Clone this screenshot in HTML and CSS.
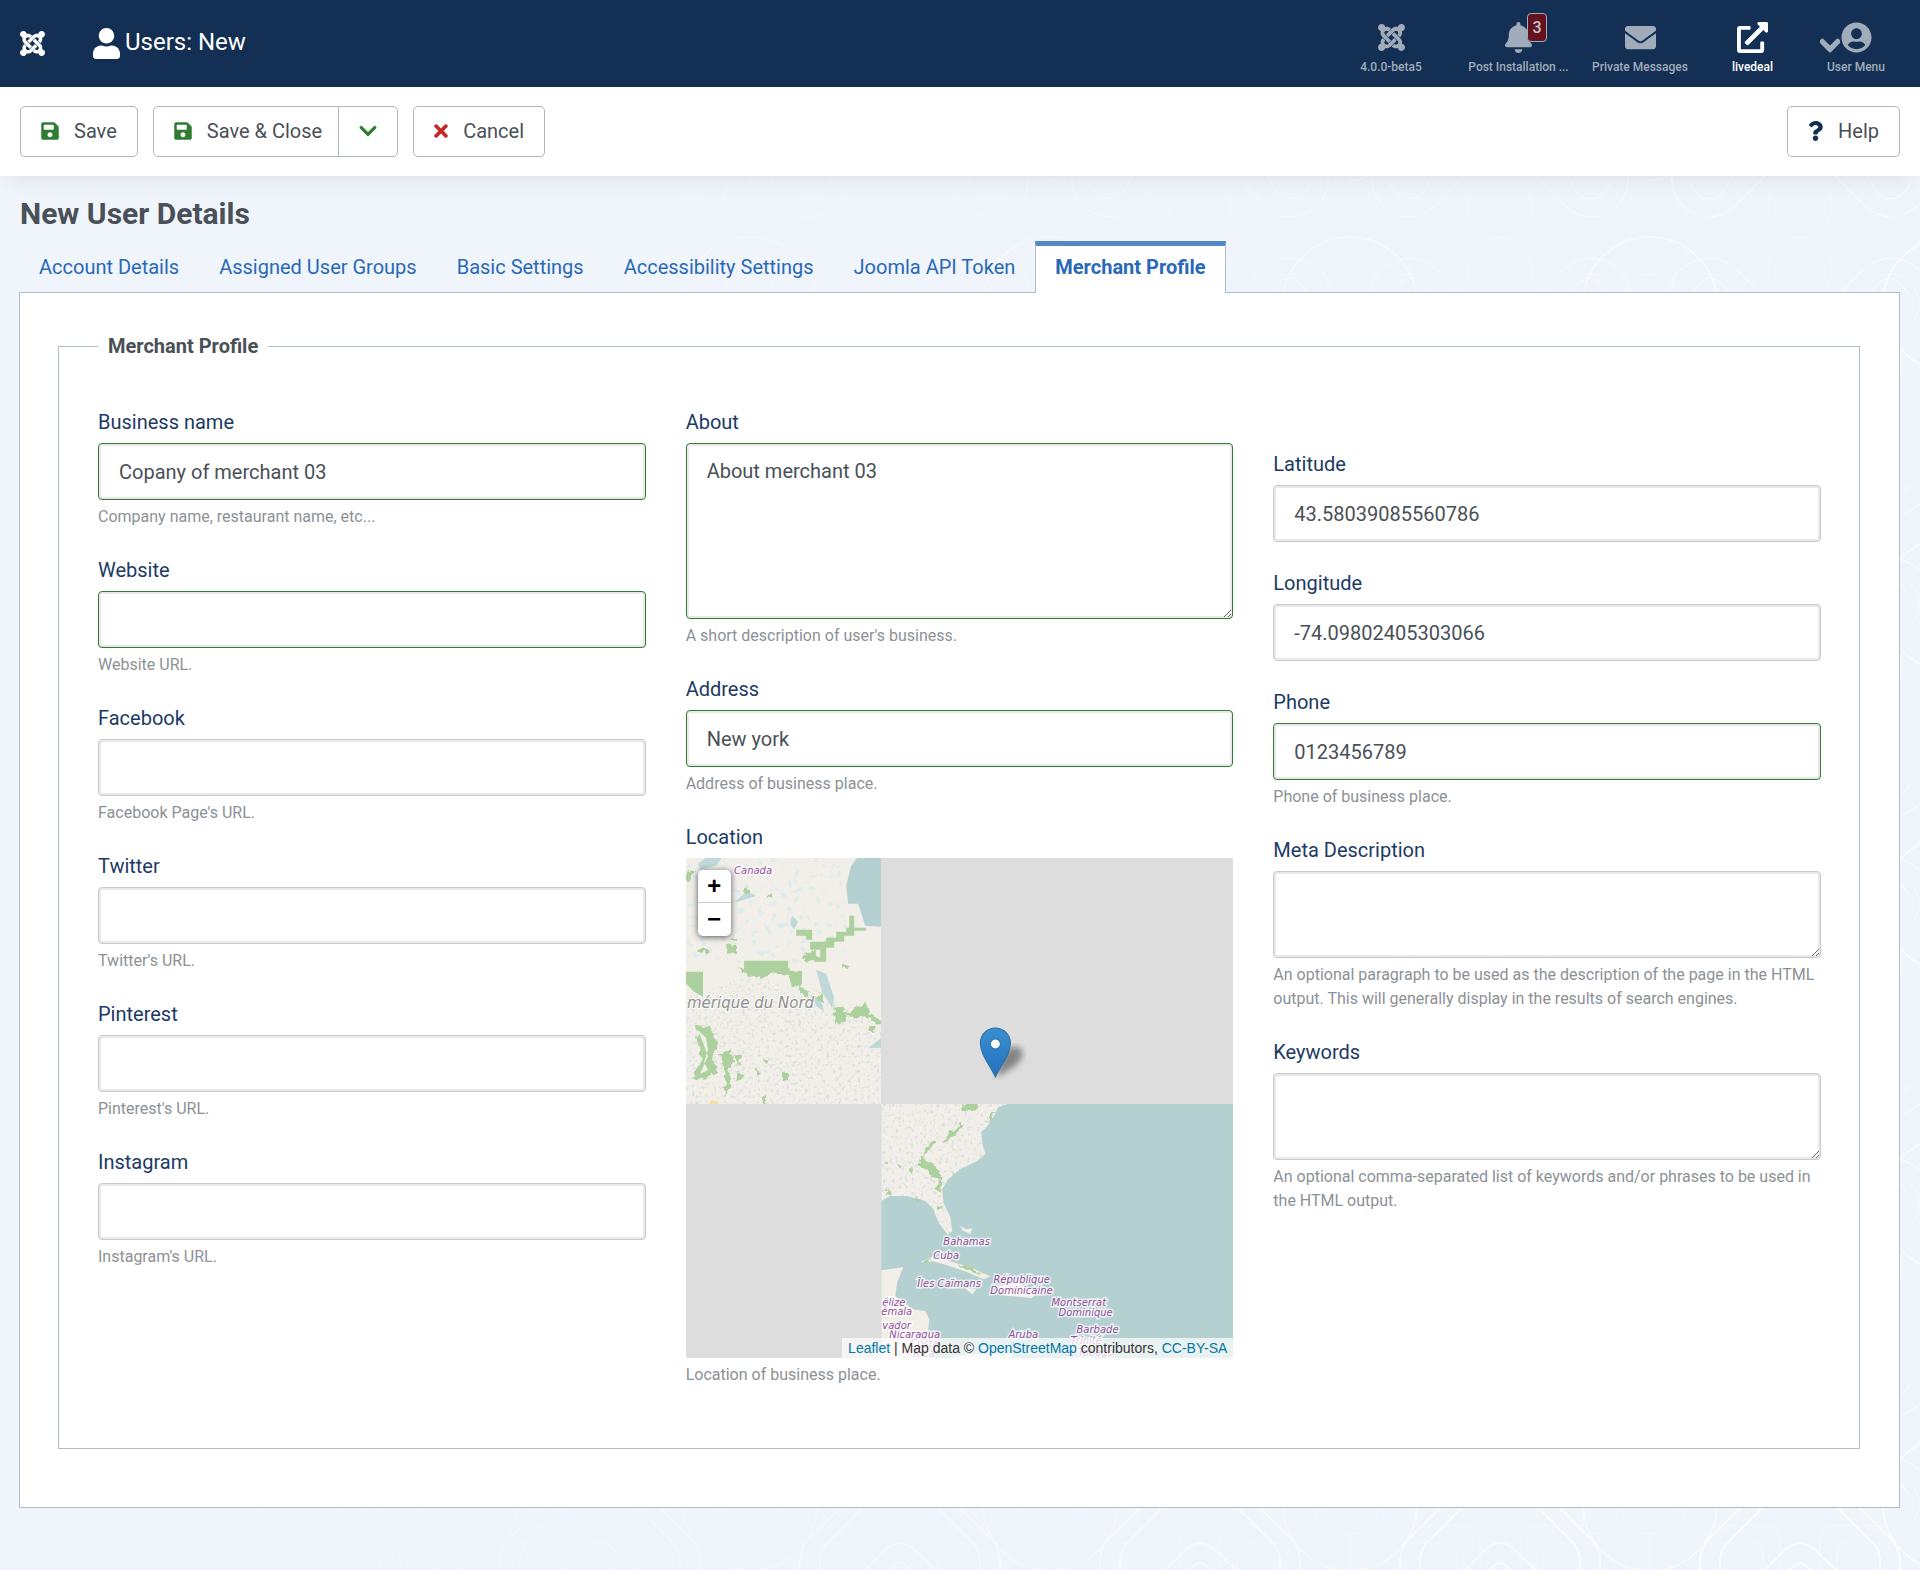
FILE: index.html
```html
<!DOCTYPE html>
<html lang="en">
<head>
<meta charset="utf-8">
<meta name="viewport" content="width=device-width, initial-scale=1">
<title>Users: New</title>
<link rel="stylesheet" href="styles.css">
</head>
<body>
<svg class="sprite" aria-hidden="true">
  <symbol id="i-joomla" viewBox="0 32 448 448"><path d="M.6 92.1C.6 58.8 27.4 32 60.4 32c30 0 54.5 21.9 59.2 50.2 32.6-7.6 67.1.6 96.5 30l-44.3 44.3c-20.5-20.5-42.6-16.3-55.4-3.5-14.3 14.3-14.3 37.9 0 52.2l99.5 99.5-44 44.3c-87.7-87.2-49.7-49.7-99.8-99.7-26.8-26.5-35-64.8-24.8-98.9C20.4 144.6.6 120.7.6 92.1zm129.5 116.4l44.3 44.3c10-10 89.7-89.7 99.7-99.8 14.3-14.3 37.6-14.3 51.9 0 12.8 12.8 17 35-3.5 55.4l44 44.3c31.2-31.2 38.5-67.6 28.9-101.2 29.2-4.1 51.9-29.2 51.9-59.5 0-33.2-26.8-60.1-59.8-60.1-30.3 0-55.4 22.5-59.5 51.6-33.8-9.9-71.7-1.5-98.3 25.1-18.3 19.1-71.1 71.5-99.6 99.9zm266.3 152.2c8.2-32.7-.9-68.5-26.3-93.9-11.8-12.2 5 4.7-99.5-99.7l-44.3 44.3 99.7 99.7c14.3 14.3 14.3 37.6 0 51.9-12.8 12.8-35 17-55.4-3.5l-44 44.3c27.6 30.2 68 38.8 102.7 28 5.5 27.4 29.7 48.1 58.9 48.1 33 0 59.8-26.8 59.8-60.1 0-30.2-22.5-55-51.6-59.1zm-84.3-53.1l-44-44.3c-87 86.4-50.4 50.4-99.7 99.8-14.3 14.3-37.6 14.3-51.9 0-13.1-13.4-16.9-35.3 3.2-55.4l-44-44.3c-30.2 30.2-38 65.2-29.5 98.3-26.7 6-46.2 29.9-46.2 58.2C0 453.2 26.8 480 59.8 480c28.6 0 52.5-19.8 58.6-46.7 32.7 8.2 68.5-.6 94.2-26 32.1-32 12.2-12.4 99.5-99.7z"/></symbol>
  <symbol id="i-user" viewBox="0 0 448 512"><path d="M224 256c70.7 0 128-57.3 128-128S294.7 0 224 0 96 57.3 96 128s57.3 128 128 128zm89.6 32h-16.7c-22.2 10.2-46.9 16-72.9 16s-50.6-5.8-72.9-16h-16.7C60.2 288 0 348.2 0 422.4V464c0 26.5 21.5 48 48 48h352c26.5 0 48-21.5 48-48v-41.6c0-74.2-60.2-134.4-134.4-134.4z"/></symbol>
  <symbol id="i-bell" viewBox="0 0 448 512"><path d="M224 512c35.32 0 63.97-28.65 63.97-64H160.03c0 35.35 28.65 64 63.97 64zm215.39-149.71c-19.32-20.76-55.47-51.99-55.47-154.29 0-77.7-54.48-139.9-127.94-155.16V32c0-17.67-14.32-32-31.98-32s-31.98 14.33-31.98 32v20.84C118.56 68.1 64.08 130.3 64.08 208c0 102.3-36.15 133.53-55.47 154.29-6 6.45-8.66 14.16-8.61 21.71.11 16.4 12.98 32 32.1 32h383.8c19.12 0 32-15.6 32.1-32 .05-7.55-2.61-15.27-8.61-21.71z"/></symbol>
  <symbol id="i-envelope" viewBox="0 0 512 512"><path d="M502.3 190.8c3.9-3.1 9.7-.2 9.7 4.7V400c0 26.5-21.5 48-48 48H48c-26.5 0-48-21.5-48-48V195.6c0-5 5.7-7.8 9.7-4.7 22.4 17.4 52.1 39.5 154.1 113.6 21.1 15.4 56.7 47.8 92.2 47.6 35.7.3 72-32.8 92.3-47.6 102-74.1 131.6-96.3 154-113.7zM256 320c23.2.4 56.6-29.2 73.4-41.4 132.7-96.3 142.8-104.7 173.4-128.7 5.8-4.5 9.2-11.5 9.2-18.9v-19c0-26.5-21.5-48-48-48H48c-26.5 0-48 21.5-48 48v19c0 7.4 3.4 14.3 9.2 18.9 30.6 23.9 40.7 32.4 173.4 128.7 16.8 12.2 50.2 41.8 73.4 41.4z"/></symbol>
  <symbol id="i-external" viewBox="0 0 512 512"><path d="M432,320H400a16,16,0,0,0-16,16V448H64V128H208a16,16,0,0,0,16-16V80a16,16,0,0,0-16-16H48A48,48,0,0,0,0,112V464a48,48,0,0,0,48,48H400a48,48,0,0,0,48-48V336A16,16,0,0,0,432,320ZM488,0h-128c-21.37,0-32.05,25.91-17,41l35.73,35.73L135,320.37a24,24,0,0,0,0,34L157.67,377a24,24,0,0,0,34,0L435.28,133.32,471,169c15,15,41,4.5,41-17V24A24,24,0,0,0,488,0Z"/></symbol>
  <symbol id="i-account" viewBox="0 0 496 512"><path d="M248 8C111 8 0 119 0 256s111 248 248 248 248-111 248-248S385 8 248 8zm0 96c48.6 0 88 39.4 88 88s-39.4 88-88 88-88-39.4-88-88 39.4-88 88-88zm0 344c-58.7 0-111.3-26.6-146.5-68.2 18.8-35.4 55.6-59.8 98.5-59.8 2.4 0 4.8.4 7.1 1.1 13 4.2 26.6 6.9 40.9 6.9 14.3 0 28-2.7 40.9-6.9 2.3-.7 4.7-1.1 7.1-1.1 42.9 0 79.7 24.4 98.5 59.8C359.3 421.4 306.7 448 248 448z"/></symbol>
  <symbol id="i-chevron" viewBox="0 0 448 512"><path d="M207.029 381.476L12.686 187.132c-9.373-9.373-9.373-24.569 0-33.941l22.667-22.667c9.357-9.357 24.522-9.375 33.901-.04L224 284.505l154.745-154.021c9.379-9.335 24.544-9.317 33.901.04l22.667 22.667c9.373 9.373 9.373 24.569 0 33.941L240.971 381.476c-9.373 9.372-24.569 9.372-33.942 0z"/></symbol>
  <symbol id="i-save" viewBox="0 0 448 512"><path d="M433.941 129.941l-83.882-83.882A48 48 0 0 0 316.118 32H48C21.49 32 0 53.49 0 80v352c0 26.51 21.49 48 48 48h352c26.51 0 48-21.49 48-48V163.882a48 48 0 0 0-14.059-33.941zM224 416c-35.346 0-64-28.654-64-64 0-35.346 28.654-64 64-64s64 28.654 64 64c0 35.346-28.654 64-64 64zm96-304.52V212c0 6.627-5.373 12-12 12H76c-6.627 0-12-5.373-12-12V108c0-6.627 5.373-12 12-12h228.52c3.183 0 6.235 1.264 8.485 3.515l3.48 3.48A11.996 11.996 0 0 1 320 111.48z"/></symbol>
  <symbol id="i-times" viewBox="0 0 352 512"><path d="M242.72 256l100.07-100.07c12.28-12.28 12.28-32.19 0-44.48l-22.24-22.24c-12.28-12.28-32.19-12.28-44.48 0L176 189.28 75.93 89.21c-12.28-12.28-32.19-12.28-44.48 0L9.21 111.45c-12.28 12.28-12.28 32.19 0 44.48L109.28 256 9.21 356.07c-12.28 12.28-12.28 32.19 0 44.48l22.24 22.24c12.28 12.28 32.2 12.28 44.48 0L176 322.72l100.07 100.07c12.28 12.28 32.2 12.28 44.48 0l22.24-22.24c12.28-12.28 12.28-32.19 0-44.48L242.72 256z"/></symbol>
  <symbol id="i-question" viewBox="0 0 384 512"><path d="M202.021 0C122.202 0 70.503 32.703 29.914 91.026c-7.363 10.58-5.093 25.086 5.178 32.874l43.138 32.709c10.373 7.865 25.132 6.026 33.253-4.148 25.049-31.381 43.63-49.449 82.757-49.449 30.764 0 68.816 19.799 68.816 49.631 0 22.552-18.617 34.134-48.993 51.164-35.423 19.86-82.299 44.576-82.299 106.405V320c0 13.255 10.745 24 24 24h72.471c13.255 0 24-10.745 24-24v-5.773c0-42.86 125.268-44.645 125.268-160.627C377.504 66.256 286.902 0 202.021 0zM192 373.459c-38.196 0-69.271 31.075-69.271 69.271 0 38.195 31.075 69.27 69.271 69.27s69.271-31.075 69.271-69.271-31.075-69.27-69.271-69.27z"/></symbol>
</svg>

<header class="topbar">
  <a class="brand" href="#" aria-label="Home"><svg class="ico-25"><use href="#i-joomla"/></svg></a>
  <h1 class="page-title"><svg class="ico-user"><use href="#i-user"/></svg>Users: New</h1>
  <nav class="status">
    <a class="status-item" href="#"><span class="status-icon"><svg class="ico-27"><use href="#i-joomla"/></svg></span>4.0.0-beta5</a>
    <a class="status-item" href="#"><span class="status-icon"><svg class="ico-31"><use href="#i-bell"/></svg><span class="badge">3</span></span>Post Installation ...</a>
    <a class="status-item" href="#"><span class="status-icon"><svg class="ico-31"><use href="#i-envelope"/></svg></span>Private Messages</a>
    <a class="status-item is-site" href="#"><span class="status-icon"><svg class="ico-31"><use href="#i-external"/></svg></span>livedeal</a>
    <a class="status-item" href="#"><span class="status-icon"><svg class="caret"><use href="#i-chevron"/></svg><svg class="ico-31"><use href="#i-account"/></svg></span>User Menu</a>
  </nav>
</header>

<div class="toolbar">
  <button class="btn" type="button"><svg class="save"><use href="#i-save"/></svg>Save</button>
  <div class="btn-group">
    <button class="btn" type="button"><svg class="save"><use href="#i-save"/></svg>Save &amp; Close</button>
    <button class="btn btn-caret" type="button" aria-label="More save options"><svg class="save"><use href="#i-chevron"/></svg></button>
  </div>
  <button class="btn" type="button"><svg class="cancel"><use href="#i-times"/></svg>Cancel</button>
  <button class="btn btn-help" type="button"><svg class="help-icon"><use href="#i-question"/></svg>Help</button>
</div>

<main class="main">
  <svg class="backdrop" aria-hidden="true">
    <defs>
      <linearGradient id="fade"><stop offset="0" stop-color="#000"/><stop offset="1" stop-color="#fff"/></linearGradient>
      <mask id="fade-mask"><rect width="100%" height="100%" fill="url(#fade)"/></mask>
      <pattern id="lines" width="300" height="300" x="150" patternUnits="userSpaceOnUse">
        <g fill="none" stroke="#fff" stroke-width="1">
          <path d="M30 -10Q5 12 -5 0M120 -5L85 30Q60 52 33 30Q20 18 22 -5M180 -5L215 30Q240 52 267 30Q280 18 278 -5"/>
          <path d="M83 -5Q75 23 60 23Q48 23 40 8M217 -5Q225 23 240 23Q252 23 260 8"/>
          <path d="M22 120Q20 98 33 92Q60 72 85 92L115 122M278 120Q280 98 267 92Q240 72 215 92L185 122M42 118Q60 86 80 118M258 118Q240 86 220 118"/>
          <g opacity=".5"><circle cx="150" cy="94" r="32"/><circle cx="150" cy="30" r="32"/><path d="M0 0v14M300 0v14M0 105v12M300 105v12"/></g>
          <circle cx="0" cy="128" r="67" stroke-width="2" opacity=".8"/><circle cx="300" cy="128" r="67" stroke-width="2" opacity=".8"/>
          <g opacity=".6"><circle cx="0" cy="128" r="30"/><circle cx="300" cy="128" r="30"/><path d="M0 158v50M300 158v50"/><circle cx="61" cy="128" r="30"/><circle cx="239" cy="128" r="30"/>
          <path d="M62 150H115Q130 150 130 168V220M238 150H185Q170 150 170 168V220M57 167H105Q113 170 113 182V220M243 167H195Q187 170 187 182V220"/></g>
          <path stroke-width="2" d="M90 132L56 166Q46 180 52 210M112 132L76 168Q66 180 72 204M210 132L244 166Q254 180 248 210M188 132L224 168Q234 180 228 204M115 194L136 173Q150 161 164 173L190 198M140 194Q150 180 160 194"/>
        </g>
      </pattern>
    </defs>
    <rect width="100%" height="100%" fill="url(#lines)" mask="url(#fade-mask)"/>
  </svg>

  <h2 class="form-title">New User Details</h2>
  <nav class="tabs">
    <a class="tab" href="#">Account Details</a>
    <a class="tab" href="#">Assigned User Groups</a>
    <a class="tab" href="#">Basic Settings</a>
    <a class="tab" href="#">Accessibility Settings</a>
    <a class="tab" href="#">Joomla API Token</a>
    <a class="tab is-active" href="#" aria-current="page">Merchant Profile</a>
  </nav>

  <form class="panel">
    <fieldset class="fieldset">
      <legend>Merchant Profile</legend>
      <div class="columns">
        <div class="column">
          <div class="field"><label for="business">Business name</label><input class="control is-valid" id="business" type="text" value="Copany of merchant 03"><small>Company name, restaurant name, etc...</small></div>
          <div class="field"><label for="website">Website</label><input class="control is-valid" id="website" type="text"><small>Website URL.</small></div>
          <div class="field"><label for="facebook">Facebook</label><input class="control" id="facebook" type="text"><small>Facebook Page's URL.</small></div>
          <div class="field"><label for="twitter">Twitter</label><input class="control" id="twitter" type="text"><small>Twitter's URL.</small></div>
          <div class="field"><label for="pinterest">Pinterest</label><input class="control" id="pinterest" type="text"><small>Pinterest's URL.</small></div>
          <div class="field"><label for="instagram">Instagram</label><input class="control" id="instagram" type="text"><small>Instagram's URL.</small></div>
        </div>

        <div class="column">
          <div class="field"><label for="about">About</label><textarea class="control is-valid is-tall" id="about">About merchant 03</textarea><small>A short description of user's business.</small></div>
          <div class="field"><label for="address">Address</label><input class="control is-valid" id="address" type="text" value="New york"><small>Address of business place.</small></div>
          <div class="field">
            <span class="label">Location</span>
            <div class="map">
              <svg class="map-canvas" viewBox="0 0 547 500" preserveAspectRatio="xMidYMid slice">
                <defs>
                  <filter id="speckle" x="0" y="0" width="100%" height="100%">
                    <feTurbulence type="fractalNoise" baseFrequency=".32" numOctaves="2" seed="4"/>
                    <feColorMatrix values="0 0 0 0 .68  0 0 0 0 .71  0 0 0 0 .71  3.5 0 0 0 -1.85"/>
                    <feComposite in2="SourceGraphic" operator="in"/>
                  </filter>
                  <filter id="lakes" x="0" y="0" width="100%" height="100%">
                    <feTurbulence type="fractalNoise" baseFrequency=".14" numOctaves="3" seed="9"/>
                    <feColorMatrix values="0 0 0 0 .7  0 0 0 0 .83  0 0 0 0 .84  6 0 0 0 -3.5"/>
                    <feComposite in2="SourceGraphic" operator="in"/>
                  </filter>
                  <filter id="ragged"><feTurbulence type="fractalNoise" baseFrequency=".18" numOctaves="2" seed="2"/><feDisplacementMap in="SourceGraphic" scale="7" xChannelSelector="R" yChannelSelector="G"/></filter>
                  <filter id="soft"><feGaussianBlur stdDeviation="3"/></filter>
                  <linearGradient id="pin" x2="0" y2="1"><stop offset="0" stop-color="#3b8fd0"/><stop offset="1" stop-color="#2272bd"/></linearGradient>
                  <clipPath id="tile-nw"><rect width="195" height="246"/></clipPath>
                  <clipPath id="tile-se"><rect x="195" y="246" width="352" height="254"/></clipPath>
                </defs>
                <g clip-path="url(#tile-nw)">
                  <rect width="195" height="246" fill="#f2efe9"/>
                  <rect width="160" height="105" fill="#000" filter="url(#lakes)"/>
                  <path d="M0 140L60 118L130 130L195 170V246H0z" filter="url(#speckle)"/>
                  <path d="M12 6L20 0H36L30 8L14 12zM48 45L60 34L70 38L58 42zM106 58L112 64L108 72L104 66zM130 112L140 116L148 140L146 150L136 134zM126 138L134 140L138 154L130 148zM182 190L195 180V190z" fill="#bfd8d9"/>
                  <path d="M195 0H171L165 8L160 28L162 46H172L179 68L195 69z" fill="#b5d0d0"/>
                  <g fill="#add19e">
                    <g filter="url(#ragged)">
                      <path d="M0 14L8 12L4 24H0zM14 91L24 93L22 96L12 94zM45 80H52V83H45zM39 87H50L52 96H42zM58 31H63V36H58zM81 36H85V40H81zM156 107H162V111H156zM52 110H104L102 119L90 115L70 121L54 112zM100 113H116V127L106 130zM116 100L126 92L136 102L122 104zM114 128L122 134V140L114 136zM134 132L138 146L132 142zM148 150L158 148L160 162L150 166zM158 156L180 144L184 156L196 164V168L180 158L162 160zM182 168H188V173H182z"/>
                      <path d="M10 167L22 168L32 184L26 200L32 214L22 220L10 222L8 216L16 200L12 184zM34 196L44 190L48 204L42 212L46 226L38 240L40 220zM48 198L56 196L54 208zM52 212L58 220L50 224zM68 208L76 216L72 220zM78 200L84 202L80 206zM96 212L102 216L100 224L96 220zM76 238H80V246H76z"/>
                    </g>
                    <path d="M0 114H17V139L8 134L0 126zM58 103H102V113H58zM110 72H126V82H120V78H110zM124 84H140V80H150V74H160V70H163V58H168V70H180V73H168V78H158V84H148V90H140V104H128V100H134V92H124z"/>
                  </g>
                  <path d="M12 172L20 180L22 192L18 204L22 212L14 216L22 198z" fill="#f2efe9"/>
                  <path d="M24 243h8v3h-8z" fill="#f8e0a0"/>
                  <g class="map-country"><text x="48" y="16">Canada</text></g>
                  <text class="map-continent" x="1" y="150">mérique du Nord</text>
                </g>
                <g clip-path="url(#tile-se)">
                  <rect x="195" y="246" width="352" height="254" fill="#b5d0d0"/>
                  <g fill="#f2efe9">
                    <path id="coast" d="M195 246H321L312 249L307 259L301 268L295 274L296 286L299 296L291 303L274 311L262 321L256 331L257 344L264 359L266 373L261 376L252 364L247 351L239 343L221 338L204 338L195 343z"/>
                    <path d="M195 412L217 409L211 424L209 438L227 451L239 453L243 461L241 481L243 500H195zM234 404L246 398L267 404L284 409L304 418L297 421L281 414L264 408L247 403zM279 430L290 431L286 436zM308 428L330 424L352 434L345 440L318 437zM274 368L280 371L286 370L284 376L276 372zM268 498L285 496L326 495L325 500H268z"/>
                  </g>
                  <use href="#coast" filter="url(#speckle)"/>
                  <g fill="#add19e" filter="url(#ragged)">
                    <path d="M276 246H290V252H276zM304 254L308 253L306 262L301 264zM274 266L276 270L264 282L256 284L262 276zM246 282L250 284L244 292L234 300L242 288zM234 298L244 304L252 312L256 322L246 320L240 312L232 308zM252 322L256 324L254 336L250 330zM198 302L202 304L200 308zM212 306L216 308L214 312zM222 312L228 308L224 316zM200 330L206 336L200 338zM230 340L236 342L232 344zM252 346L256 350L252 352zM266 314L271 316L268 319zM234 404L246 398L242 404zM270 404L282 408L300 417L280 412z"/>
                  </g>
                  <g class="map-country">
                    <text x="257" y="387">Bahamas</text><text x="247" y="401">Cuba</text><text x="231" y="429">Îles Caïmans</text>
                    <text x="307" y="425">République</text><text x="304" y="436">Dominicaine</text><text x="365" y="448">Montserrat</text>
                    <text x="372" y="458">Dominique</text><text x="390" y="475">Barbade</text><text x="322" y="480">Aruba</text>
                    <text x="203" y="480">Nicaragua</text><text x="196" y="448">élize</text><text x="195" y="457">émala</text><text x="196" y="471">vador</text>
                    <text x="384" y="486">Trinité</text><text x="378" y="498">et Tobago</text><text x="224" y="489">Costa</text><text x="227" y="499">Rica</text>
                  </g>
                </g>
                <path d="M309 219L316 196Q330 182 336 194Q338 206 309 219z" fill="#000" opacity=".4" filter="url(#soft)"/>
                <path d="M309 219C304 208 294 197 294 185A15 15 0 0 1 324 185C324 197 314 208 309 219z" fill="url(#pin)" stroke="#2d6e9f"/>
                <circle cx="309" cy="186" r="5" fill="#fff" stroke="#2d6e9f"/>
              </svg>
              <div class="map-zoom"><button type="button" aria-label="Zoom in">+</button><button type="button" aria-label="Zoom out">−</button></div>
              <div class="map-credit"><a href="#">Leaflet</a> | Map data © <a href="#">OpenStreetMap</a> contributors, <a href="#">CC-BY-SA</a></div>
            </div>
            <small>Location of business place.</small>
          </div>
        </div>

        <div class="column is-lowered">
          <div class="field"><label for="lat">Latitude</label><input class="control" id="lat" type="text" value="43.58039085560786"></div>
          <div class="field"><label for="lng">Longitude</label><input class="control" id="lng" type="text" value="-74.09802405303066"></div>
          <div class="field"><label for="phone">Phone</label><input class="control is-valid" id="phone" type="tel" value="0123456789"><small>Phone of business place.</small></div>
          <div class="field"><label for="meta">Meta Description</label><textarea class="control" id="meta"></textarea><small>An optional paragraph to be used as the description of the page in the HTML output. This will generally display in the results of search engines.</small></div>
          <div class="field"><label for="keywords">Keywords</label><textarea class="control" id="keywords"></textarea><small>An optional comma-separated list of keywords and/or phrases to be used in the HTML output.</small></div>
        </div>
      </div>
    </fieldset>
  </form>
</main>
</body>
</html>
```
FILE: styles.css
```css
* { box-sizing: border-box; }

body {
  margin: 0;
  min-height: 100vh;
  display: flex;
  flex-direction: column;
  background: #f0f4fb;
  color: #495057;
  font: 20px/30px Roboto, "Liberation Sans", sans-serif;
}

a { color: #2a69b8; text-decoration: none; }
svg { display: block; fill: currentColor; }
.sprite { position: absolute; width: 0; height: 0; }

/* Top bar */
.topbar {
  display: flex;
  align-items: center;
  height: 87px;
  padding: 0 13px 0 20px;
  background: #132f53;
  color: #fff;
}
.brand { color: #fff; }
.ico-25 { width: 25px; height: 25px; }
.ico-27 { width: 27px; height: 27px; }
.ico-31 { width: 31px; height: 31px; }
.ico-user { width: 27px; height: 31px; }
.page-title {
  display: flex;
  align-items: flex-start;
  gap: 5px;
  margin: 0 auto 0 48px;
  font-size: 24px;
  font-weight: 400;
  line-height: 28px;
}
.status {
  display: grid;
  grid-template-columns: 132px 123px 120px 105px 102px;
  padding-top: 12px;
}
.status-item {
  display: flex;
  flex-direction: column;
  align-items: center;
  gap: 4px;
  color: #a1acba;
  font-size: 12px;
  font-weight: 500;
  line-height: 20px;
}
.status-item.is-site { color: #fff; }
.status-icon {
  position: relative;
  display: flex;
  align-items: center;
  height: 31px;
}
.badge {
  position: absolute;
  left: 24px;
  top: -9px;
  width: 20px;
  height: 29px;
  border: 1px solid #a1acba;
  border-radius: 4px;
  background: #65121f;
  color: #c5c4cd;
  font-size: 16px;
  line-height: 27px;
  text-align: center;
}
.caret {
  position: absolute;
  right: 32px;
  top: 12px;
  width: 20px;
  height: 23px;
  overflow: visible;
  stroke: currentColor;
  stroke-width: 40px;
}

/* Toolbar */
.toolbar {
  position: relative;
  z-index: 1;
  display: flex;
  gap: 15px;
  padding: 19px 20px;
  background: #fff;
  box-shadow: 0 12px 20px -10px rgba(0, 0, 0, .1);
}
.btn-group { display: flex; }
.btn {
  display: flex;
  align-items: center;
  gap: 15px;
  height: 51px;
  padding: 0 20px 2px;
  border: 1px solid #adb5bd;
  border-radius: 5px;
  background: #fff;
  color: #495057;
  font: inherit;
}
.btn-group .btn:first-child {
  padding-right: 16px;
  border-radius: 5px 0 0 5px;
}
.btn-group .btn-caret {
  margin-left: -1px;
  border-radius: 0 5px 5px 0;
}
.btn-help { margin-left: auto; }
.save { width: 18px; height: 20px; color: #2f7d32; }
.cancel { width: 14px; height: 20px; color: #c52827; }
.help-icon { width: 15px; height: 20px; color: #132f53; }

/* Main */
.main {
  position: relative;
  flex: 1;
  padding: 20px 20px 60px 19px;
}
.backdrop {
  position: absolute;
  inset: 0;
  width: 100%;
  height: 100%;
  opacity: .75;
}
.form-title {
  position: relative;
  margin: 0 0 9px;
  padding-left: 1px;
  font-size: 30px;
  font-weight: 700;
  line-height: 36px;
}
.tabs {
  position: relative;
  z-index: 1;
  display: flex;
  margin-bottom: -1px;
}
.tab {
  height: 52px;
  padding: 11px 20px 0;
}
.tab.is-active {
  padding: 6px 19px 0;
  border: 1px solid #b0bdcd;
  border-top: 5px solid #5387c6;
  border-bottom: 0;
  background: #fff;
  font-weight: 700;
}
.panel {
  position: relative;
  padding: 38px 39px 58px 38px;
  border: 1px solid #b0bdcd;
  background: #fff;
}
.fieldset {
  margin: 0;
  padding: 46px 38px 35px 39px;
  border: 1px solid #b0bdcd;
}
.fieldset legend {
  padding: 0 10px;
  font-weight: 700;
}
.columns {
  display: grid;
  grid-template-columns: repeat(3, minmax(0, 1fr));
  gap: 40px;
}
.is-lowered { padding-top: 42px; }
.field { margin-bottom: 26px; }
.field label, .label {
  display: block;
  margin-bottom: 6px;
  color: #1c3a64;
}
.field small {
  display: block;
  margin-top: 5px;
  color: #8c9196;
  font-size: 16px;
  line-height: 24px;
}
.control {
  display: block;
  width: 100%;
  height: 57px;
  padding: 0 20px;
  border: 1px solid #c9c9c9;
  border-radius: 4px;
  background: #fff;
  box-shadow: inset 0 0 0 2px #e9e9e9;
  color: #495057;
  font: inherit;
}
textarea.control { height: 87px; padding: 12px 20px; resize: vertical; }
textarea.is-tall { height: 176px; }
.control.is-valid { border-color: #2f7d32; }

/* Map */
.map {
  position: relative;
  height: 500px;
  overflow: hidden;
  background: #ddd;
}
.map-canvas { width: 100%; height: 100%; }
.map-country {
  fill: #94509c;
  stroke: #fff;
  stroke-width: 3px;
  stroke-opacity: .7;
  paint-order: stroke;
  font: italic 10px "DejaVu Sans", sans-serif;
}
.map-continent {
  fill: #8f9091;
  stroke: #fff;
  stroke-width: 2px;
  stroke-opacity: .7;
  paint-order: stroke;
  font: italic 15px "DejaVu Sans", sans-serif;
}
.map-zoom {
  position: absolute;
  left: 12px;
  top: 12px;
  display: flex;
  flex-direction: column;
  width: 33px;
  border-radius: 5px;
  background: #fff;
  box-shadow: 0 1px 6px rgba(0, 0, 0, .65);
}
.map-zoom button {
  height: 33px;
  padding: 2px 0 0;
  border: 0;
  background: none;
  color: #000;
  font: bold 24px/32px "Liberation Mono", monospace;
}
.map-zoom button:first-child { border-bottom: 1px solid #ccc; }
.map-credit {
  position: absolute;
  right: 0;
  bottom: 0;
  padding: 0 6px;
  background: rgba(255, 255, 255, .7);
  color: #333;
  font: 14px/20px "Liberation Sans", sans-serif;
}
.map-credit a { color: #0078a8; }
```
